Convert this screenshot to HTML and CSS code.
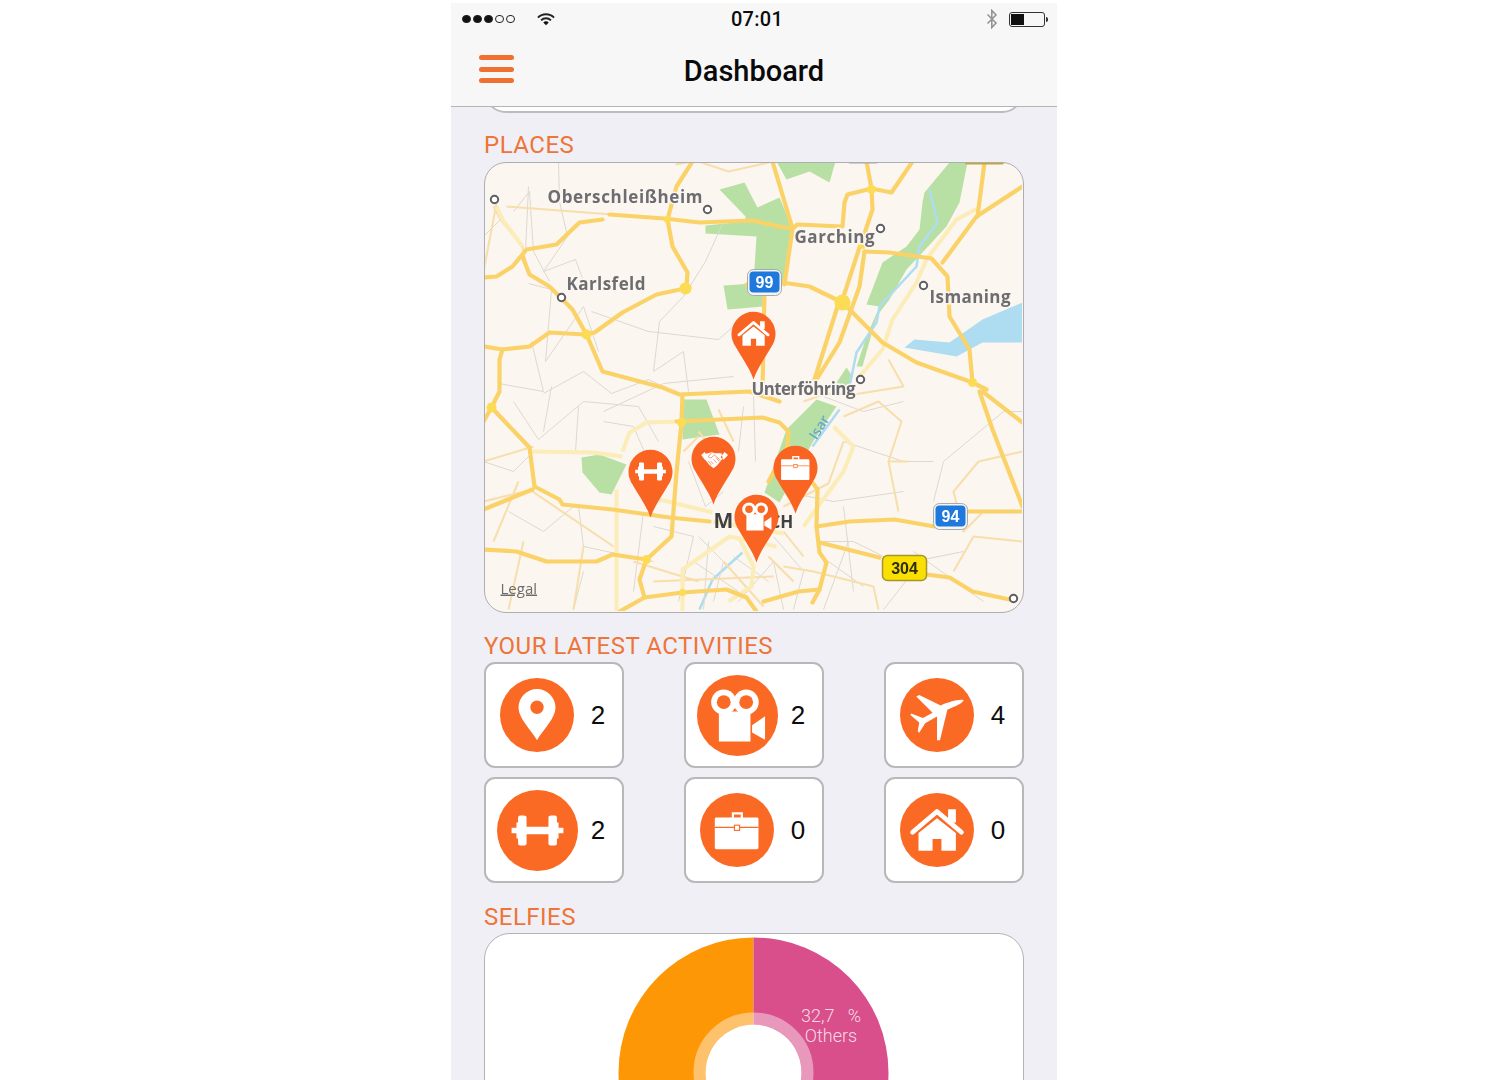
FILE: index.html
```html
<!DOCTYPE html>
<html lang="en">
<head>
<meta charset="utf-8">
<title>Dashboard</title>
<link rel="stylesheet" href="styles.css">
</head>
<body>
<svg class="defs" width="0" height="0" aria-hidden="true">
  <defs>
    <symbol id="i-home" viewBox="0 0 100 100">
      <path class="w" d="M25 54 50 34 75.500 54V78H56V62H44V78H25Z"/>
      <path class="w" d="M65 22H75.500V40H65Z"/>
      <path class="wl" d="M17 53 50 25 83 53"/>
    </symbol>
    <symbol id="i-plane" viewBox="0 0 100 100">
      <path class="w" d="M86 30C84 35 74 38 64 43L54 84 50 84 50 52 34 61 26 74 24 72 26 60 14 50 15 48 31 54 44 47 22 25 26 23 55 37C65 33 80 28 86 30Z"/>
    </symbol>
    <symbol id="i-video" viewBox="0 0 100 100">
      <circle class="w" cx="33" cy="33.500" r="15.500"/>
      <circle class="w" cx="60.700" cy="33.500" r="15.500"/>
      <path class="w" d="M27 45H66V82H27ZM68 62 84 51V80L68 71Z"/>
      <circle class="o" cx="33" cy="33.500" r="8.500"/>
      <circle class="o" cx="60.700" cy="33.500" r="8.500"/>
    </symbol>
    <symbol id="i-pin" viewBox="0 0 100 100">
      <path class="w" d="M50 84C42 70 25 55 25 40A25 25 0 0 1 75 40C75 55 58 70 50 84Z"/>
      <circle class="o" cx="50" cy="39.500" r="9"/>
    </symbol>
    <symbol id="i-gym" viewBox="0 0 100 100">
      <path class="w" d="M18 46.500H24V40H26V34Q26 31.500 28.500 31.500H33Q36.500 31.500 36.500 34V45.500H63.500V34Q63.500 31.500 67 31.500H71.500Q74 31.500 74 34V40H76V46.500H82V53.500H76V60H74V66Q74 68.500 71.500 68.500H67Q63.500 68.500 63.500 66V54.500H36.500V66Q36.500 68.500 33 68.500H28.500Q26 68.500 26 66V60H24V53.500H18Z"/>
    </symbol>
    <symbol id="i-case" viewBox="0 0 100 100">
      <path class="w" d="M43 33V26H58V33H55V29H46V33ZM22 33H77Q79 33 79 35V74Q79 76 77 76H22Q20 76 20 74V35Q20 33 22 33Z"/>
      <path class="ol" d="M20 46.500H79"/>
      <rect class="wb" x="46.500" y="43.500" width="7" height="7"/>
    </symbol>
    <symbol id="i-shake" viewBox="0 0 100 100">
      <path class="w" d="M22 42 30 35 38 48 31 54ZM83 42 75 35 66 47 73 53ZM33 39 46 36 54 38 68 38 71 50 58 66 50 72 40 64 31 52Z"/>
      <path class="ol" d="M46 37 38 46 44 49 52 42 66 54M44 56 50 63M50 52 57 60M56 48 63 57M38 56 45 65"/>
    </symbol>
  </defs>
</svg>

<main class="phone">
  <header class="bars">
    <div class="status">
      <div class="status-left">
        <span class="signal"><i class="dot on"></i><i class="dot on"></i><i class="dot on"></i><i class="dot"></i><i class="dot"></i></span>
        <svg class="wifi" width="18" height="13" viewBox="0 0 20 14">
          <path d="M1 5A12.500 12.500 0 0 1 19 5" class="wifi-arc"/>
          <path d="M4.500 8A7.500 7.500 0 0 1 15.500 8" class="wifi-arc"/>
          <path d="M7 10.300A3.800 3.800 0 0 1 13 10.300L10 13.500Z" class="wifi-fill"/>
        </svg>
      </div>
      <span class="time">07:01</span>
      <div class="status-right">
        <svg class="bt" width="12" height="20" viewBox="0 0 12 20"><path d="M1.500 5.500 10 14 5.800 18.500V1.500L10 6 1.500 14.500"/></svg>
        <span class="battery"><span class="battery-level"></span></span>
      </div>
    </div>
    <nav class="nav">
      <div class="burger"><i></i><i></i><i></i></div>
      <h1 class="title">Dashboard</h1>
      <div></div>
    </nav>
  </header>

  <div class="content">
    <div class="prev-card"></div>

    <h2 class="heading first">PLACES</h2>
    <div class="map">
      <svg class="map-svg" viewBox="1.500 1.500 537 448" width="537" height="448">
        <g class="green">
          <path d="M236 28 261 21 274 46 296 36 309 67 301 122 281 130 280 145 244 148 240 124 270 122 273 75 222 72 222 64 262 60 262 55Z"/>
          <path d="M293 0H352L346 21 326 10 303 18Z"/>
          <path d="M441 31 466 1H484L476 41 463 65 439 91 423 108 406 138 393 155 379 205H373L383 175 396 145 383 143 399 101 423 85 436 68 439 41Z"/>
          <path d="M353 221 363 206 369 215 366 228Z"/>
          <path d="M199 238H223L236 273 199 278Z"/>
          <path d="M98 296 116 293 143 303 128 333 116 331 99 311Z"/>
          <path d="M281 331 303 268 333 238 353 245 329 281 296 341Z"/>
        </g>
        <path class="lake" d="M421 186 431 178 466 181 499 158 539 141V181H499L473 195Z"/>
        <g class="river">
          <path d="M446 28 454 61 436 85 433 105 396 145 393 161 373 191 366 225"/>
          <path d="M356 248 329 285"/>
          <path d="M259 391 229 418 216 448"/>
        </g>
        <g class="thin">
          <path d="M75 0 76 40 84 75 60 110 92 98 102 125M45 25 42 90M0 75 20 55M30 50 46 30 50 90 66 120"/>
          <path d="M240 60 222 100 200 135 176 160 170 210 200 190 205 230M108 150 165 170 235 178 250 165 268 190M120 250 180 222 250 215"/>
          <path d="M48 180 60 230 15 222M60 232 100 210 128 232 165 218 200 235M45 122 68 128 62 200 100 145 115 190"/>
          <path d="M30 240 55 278 100 240 155 245 175 280M60 270 68 225M95 245 92 290M120 260 150 265 165 300"/>
          <path d="M0 300 30 310 50 290M25 350 60 370 90 345M95 345 100 385 170 400M160 350 150 430M170 365 210 375 195 440M100 410 90 448M225 380 220 448M210 400 255 430M255 440 290 400 300 448"/>
          <path d="M340 235 380 250 420 240M346 320 360 280 420 300 450 300M300 330 350 340 420 330M340 380 370 380 430 410 400 448M365 380 340 448M430 400 480 390M450 340 460 300 520 250 539 250M270 235 272 300M260 245 255 290"/>
          <path d="M360 345 370 430M430 390 500 440M215 375 240 400 230 440M290 375 320 410 310 448M345 400 380 425M250 395 285 420M205 300 222 345 240 330"/>
        </g>
        <g class="minor">
          <path d="M10 45 17 58 39 85 44 110M23 45 129 53M13 42 0 110"/>
          <path d="M290 0 245 10 215 0M209 0 192 3"/>
          <path d="M0 300 50 285M0 340 49 328M10 380 35 320M49 330 130 385M40 380 25 448M100 385 90 448"/>
          <path d="M235 248 250 280M215 270 240 300M200 290 215 275M150 400 215 420M170 420 290 415"/>
          <path d="M320 240 343 232 370 233 420 225 405 198M360 255 395 240 418 260 405 300 425 300M300 345 345 322 360 280M405 300 415 350M500 350 480 370 470 330 495 300 539 290M539 380 490 375 470 410"/>
          <path d="M330 410 390 425 395 448M300 405 330 410M285 395 310 420M240 400 280 445M300 370 320 395"/>
        </g>
        <g class="pale">
          <path d="M13 45 19 58 39 85"/>
          <path d="M376 215 399 188 409 158 433 121 443 98 473 58 496 46"/>
          <path d="M49 290 109 291 139 295"/>
          <path d="M139 290 146 271 163 261 193 260"/>
          <path d="M133 328V450"/>
          <path d="M199 450V408L246 375 293 385"/>
          <path d="M176 338 229 351"/>
          <path d="M350 265 370 285 360 310 320 365"/>
          <path d="M255 375 270 405 268 425 245 440M230 360 300 372"/>
        </g>
        <g class="major">
          <path d="M126 53 181 57 216 61 268 59 296 65 309 67 314 63 359 65 361 41 364 33 388 27 408 31 429 0"/>
          <path d="M383 0 388 27 389 48 379 78 376 86 359 138 354 145 331 218"/>
          <path d="M289 0 309 67 301 123"/>
          <path d="M263 123 299 121 326 125 359 141 399 181 433 201 489 221 503 228"/>
          <path d="M381 90 406 91 448 97 464 115 466 155 486 188 489 221"/>
          <path d="M381 90 376 125 356 181 333 218"/>
          <path d="M459 101 493 55 539 25M501 1 494 55"/>
          <path d="M209 0 193 25 184 58 189 85 204 111 203 125"/>
          <path d="M206 126 173 133 139 151 111 171 101 173 66 171 46 185 19 188 0 185"/>
          <path d="M119 58 96 61 73 83 43 88 29 105 13 115 0 116"/>
          <path d="M39 95 46 113 66 125 89 148 103 173 119 210 179 226 196 233 266 230 296 240"/>
          <path d="M19 188 16 198V228M281 131 279 228M16 230 8 246 46 286 51 325 76 338 79 343 129 348 186 356 226 360M0 260 8 246M0 348 49 328"/>
          <path d="M199 233 198 261 193 311 188 375 163 398 156 418 161 436 136 450"/>
          <path d="M193 260 279 256 296 261 305 270 304 285 285 320"/>
          <path d="M0 388 33 390 63 400 113 400 129 393 163 398"/>
          <path d="M161 436 199 431 243 428 263 436 273 450"/>
          <path d="M329 321 334 328 333 365 336 391 343 401 336 428 329 441"/>
          <path d="M333 365 366 360 411 358 451 365M484 350H539"/>
          <path d="M336 381 396 396M443 413 466 416 489 430 526 438"/>
          <path d="M496 230 509 268 539 345M499 230 539 261"/>
          <path d="M280 440 315 430 336 428"/>
        </g>
        <g class="junction">
          <circle cx="184" cy="58" r="3.500"/><circle cx="202" cy="127" r="6"/><circle cx="103" cy="173" r="5"/>
          <circle cx="388" cy="28" r="4.500"/><circle cx="359" cy="141" r="8"/><circle cx="379" cy="84" r="3.500"/>
          <circle cx="8" cy="246" r="5"/><circle cx="198" cy="261" r="4.500"/><circle cx="163" cy="398" r="4.500"/>
          <circle cx="489" cy="221" r="4.500"/><circle cx="199" cy="431" r="3.500"/>
        </g>
        <rect class="shield-cut" x="364" y="-8" width="31" height="10" rx="3"/>
        <rect class="yellow-cut" x="481" y="-8" width="40" height="11" rx="3"/>

        <g class="towns">
          <circle cx="11" cy="38" r="3.700"/><circle cx="224" cy="48" r="3.700"/><circle cx="78" cy="136" r="3.700"/>
          <circle cx="397" cy="67" r="3.700"/><circle cx="440" cy="124" r="3.700"/><circle cx="377" cy="218" r="3.700"/>
          <circle cx="530" cy="437" r="3.700"/>
        </g>

        <g class="labels">
          <text x="64" y="41" textLength="155">Oberschleißheim</text>
          <text x="83" y="128" textLength="79">Karlsfeld</text>
          <text x="311" y="81" textLength="80">Garching</text>
          <text x="446" y="141" textLength="81">Ismaning</text>
          <text x="268" y="233" textLength="104">Unterföhring</text>
        </g>
        <text class="isar" transform="translate(333 279) rotate(-58)">Isar</text>
        <text class="city" y="366"><tspan class="city-m" x="230">M</tspan><tspan x="256">UNI</tspan><tspan x="286">CH</tspan></text>
        <text class="legal" x="17" y="432">Legal</text>

        <g class="highway">
          <rect class="shield-edge" x="264" y="108" width="34" height="26" rx="6"/>
          <rect class="shield-blue" x="266" y="110" width="30" height="21" rx="4"/>
          <text x="281" y="126">99</text>
          <rect class="shield-edge" x="450" y="342" width="34" height="26" rx="6"/>
          <rect class="shield-blue" x="452" y="344" width="30" height="21" rx="4"/>
          <text x="467" y="360">94</text>
        </g>
        <rect class="shield-yellow" x="399" y="394" width="44" height="25" rx="5"/>
        <text class="shield-yellow-text" x="421" y="412">304</text>

        <g class="pins">
          <g transform="translate(270 172)"><path class="pin" d="M0 46C-4 34-12 24-18 13A22 22 0 1 1 18 13C12 24 4 34 0 46Z"/><use href="#i-home" x="-22" y="-22" width="44" height="44"/></g>
          <g transform="translate(167 310)"><path class="pin" d="M0 46C-4 34-12 24-18 13A22 22 0 1 1 18 13C12 24 4 34 0 46Z"/><use href="#i-gym" x="-24" y="-24" width="48" height="48"/></g>
          <g transform="translate(230 297)"><path class="pin" d="M0 46C-4 34-12 24-18 13A22 22 0 1 1 18 13C12 24 4 34 0 46Z"/><use href="#i-shake" x="-22" y="-22" width="44" height="44"/></g>
          <g transform="translate(312 306)"><path class="pin" d="M0 46C-4 34-12 24-18 13A22 22 0 1 1 18 13C12 24 4 34 0 46Z"/><use href="#i-case" x="-24" y="-24" width="48" height="48"/></g>
          <g transform="translate(273 355)"><path class="pin" d="M0 46C-4 34-12 24-18 13A22 22 0 1 1 18 13C12 24 4 34 0 46Z"/><use href="#i-video" x="-22" y="-22" width="44" height="44"/></g>
        </g>
      </svg>
    </div>

    <h2 class="heading">YOUR LATEST ACTIVITIES</h2>
    <div class="activities">
      <div class="activity"><div class="icon-slot"><svg class="badge" width="74" height="74" viewBox="0 0 100 100"><circle class="o" cx="50" cy="50" r="50"/><use href="#i-pin"/></svg></div><span class="count">2</span></div>
      <div class="activity"><div class="icon-slot"><svg class="badge" width="81" height="81" viewBox="0 0 100 100"><circle class="o" cx="50" cy="50" r="50"/><use href="#i-video"/></svg></div><span class="count">2</span></div>
      <div class="activity"><div class="icon-slot"><svg class="badge" width="74" height="74" viewBox="0 0 100 100"><circle class="o" cx="50" cy="50" r="50"/><use href="#i-plane"/></svg></div><span class="count">4</span></div>
      <div class="activity"><div class="icon-slot"><svg class="badge" width="81" height="81" viewBox="0 0 100 100"><circle class="o" cx="50" cy="50" r="50"/><use href="#i-gym"/></svg></div><span class="count">2</span></div>
      <div class="activity"><div class="icon-slot"><svg class="badge" width="74" height="74" viewBox="0 0 100 100"><circle class="o" cx="50" cy="50" r="50"/><use href="#i-case"/></svg></div><span class="count">0</span></div>
      <div class="activity"><div class="icon-slot"><svg class="badge" width="74" height="74" viewBox="0 0 100 100"><circle class="o" cx="50" cy="50" r="50"/><use href="#i-home"/></svg></div><span class="count">0</span></div>
    </div>

    <h2 class="heading selfies">SELFIES</h2>
    <div class="chart-card">
      <svg class="chart" viewBox="0 0 537 150" width="537" height="150">
        <path class="slice-orange" d="M268.500 3.500A135 135 0 0 0 268.500 273.500Z"/>
        <path class="slice-pink" d="M268.500 3.500A135 135 0 0 1 268.500 273.500Z"/>
        <circle class="hole-ring" cx="268.500" cy="138.500" r="54"/>
        <circle class="hole" cx="268.500" cy="138.500" r="48"/>
        <text class="slice-label" x="346" y="88">32,7   %</text>
        <text class="slice-label" x="346" y="108">Others</text>
      </svg>
    </div>
  </div>
</main>
</body>
</html>
```

FILE: styles.css
```css
* { box-sizing: border-box; }

html, body {
  margin: 0;
  height: 1080px;
  overflow: hidden;
  background: #fff;
}

body {
  padding: 3px 0 0 451px;
  font-family: Roboto, "Liberation Sans", sans-serif;
  color: #0c0c0c;
}

.defs { position: absolute; }

.phone {
  width: 606px;
  height: 1077px;
  overflow: hidden;
  background: #efeff5;
  display: flex;
  flex-direction: column;
}

/* Bars */
.bars {
  background: #f7f7f8;
  border-bottom: 1px solid #b4b4b6;
  height: 104px;
  flex: none;
  position: relative;
  z-index: 1;
}

.status {
  height: 32px;
  display: grid;
  grid-template-columns: 1fr auto 1fr;
  align-items: center;
  padding: 0 9px 0 11px;
}

.status-left, .status-right { display: flex; align-items: center; }
.status-right { justify-content: flex-end; }

.signal { display: flex; gap: 2.500px; }

.dot {
  width: 8.500px;
  height: 8.500px;
  border-radius: 50%;
  border: 1px solid #222;
}
.dot.on { background: #111; }

.wifi { margin-left: 22px; }
.wifi-arc { fill: none; stroke: #222; stroke-width: 2; }
.wifi-fill { fill: #111; }

.time {
  font-size: 20px;
  font-weight: 500;
  margin-left: 4px;
  letter-spacing: .3px;
}

.bt { margin-right: 11px; }
.bt path { fill: none; stroke: #949496; stroke-width: 1.600; }

.battery {
  position: relative;
  width: 36px;
  height: 15px;
  border: 1px solid #333;
  border-radius: 3px;
  padding: 1px;
  margin-right: 3px;
  display: block;
}
.battery::after {
  content: "";
  position: absolute;
  right: -4px;
  top: 4px;
  width: 2.500px;
  height: 5px;
  background: #333;
  border-radius: 0 2px 2px 0;
}
.battery-level {
  display: block;
  width: 13px;
  height: 100%;
  background: #111;
}

.nav {
  height: 71px;
  display: grid;
  grid-template-columns: 1fr auto 1fr;
  align-items: center;
  padding: 0 28px;
}

.burger {
  display: flex;
  flex-direction: column;
  gap: 6.500px;
  width: 35px;
  margin-top: -3px;
}
.burger i {
  display: block;
  height: 5px;
  border-radius: 2.500px;
  background: #f0702f;
}

.title {
  margin: 0;
  font-size: 29px;
  font-weight: 500;
  color: #0a0a0a;
}

/* Content */
.content { padding: 0 33px; }

.prev-card {
  height: 40px;
  margin-top: -34px;
  background: #fff;
  border: 2px solid #bcbcbf;
  border-radius: 0 0 22px 22px;
}

.heading {
  margin: 21px 0 4px;
  height: 24px;
  font-size: 24px;
  line-height: 24px;
  font-weight: 400;
  letter-spacing: .5px;
  color: #ee7438;
}
.heading.first { margin: 20px 0 5px; }
.heading.selfies { margin: 22px 0 4px; }

.map {
  height: 451px;
  border: 1.500px solid #aeaeb0;
  border-radius: 22px;
  overflow: hidden;
  background: #fbf6ef;
}
.map-svg { display: block; filter: blur(.45px); }

.green path { fill: #b9e0a4; }
.lake { fill: #aedcf0; }
.river path { fill: none; stroke: #aedcf0; stroke-width: 2.500; stroke-linejoin: round; }
.thin path { fill: none; stroke: #dcd9d0; stroke-width: 1; }
.minor path { fill: none; stroke: #f7deac; stroke-width: 2; stroke-linejoin: round; }
.pale path { fill: none; stroke: #fbecb8; stroke-width: 4; stroke-linejoin: round; }
.major path { fill: none; stroke: #fbd268; stroke-width: 4.200; stroke-linejoin: round; stroke-linecap: round; }
.junction circle { fill: #fddc55; }
.shield-cut { fill: #a7a5a2; }
.yellow-cut { fill: #c4a92c; }

.towns circle { fill: #fff; stroke: #5f5f62; stroke-width: 2; }

.labels text {
  font-family: "Open Sans", "Liberation Sans", sans-serif;
  font-size: 17px;
  font-weight: 700;
  fill: #6c6c71;
  stroke: #fbf6ef;
  stroke-width: 3px;
  paint-order: stroke;
}
.isar {
  font-family: "Open Sans", sans-serif;
  font-size: 14px;
  font-weight: 600;
  fill: #68a8c6;
}
.city {
  font-family: "Open Sans", "Liberation Sans", sans-serif;
  font-size: 17px;
  font-weight: 700;
  fill: #3f3f44;
}
.city-m { font-size: 21px; }
.legal {
  font-family: "Open Sans", sans-serif;
  font-size: 15px;
  fill: #6d6d6d;
  text-decoration: underline;
}

.highway text {
  font-family: "Liberation Sans", sans-serif;
  font-size: 16px;
  font-weight: 700;
  text-anchor: middle;
  fill: #fff;
}
.shield-edge { fill: #f3f4f5; stroke: #a9a9a9; stroke-width: 1; }
.shield-blue { fill: #1f78dc; }
.shield-yellow { fill: #f9e000; stroke: #a8942c; stroke-width: 1.500; }
.shield-yellow-text {
  font-family: "Liberation Sans", sans-serif;
  font-size: 16px;
  font-weight: 700;
  text-anchor: middle;
  fill: #2e2c18;
}

.pin { fill: #fa6423; }

/* Shared icon parts */
.w { fill: #fff; }
.o { fill: #fa6a24; }
.wl { fill: none; stroke: #fff; stroke-width: 6.500; stroke-linecap: round; stroke-linejoin: round; }
.ol { fill: none; stroke: #fa6a24; stroke-width: 1.500; }
.wb { fill: #fff; stroke: #fa6a24; stroke-width: 1.500; }

/* Activities */
.activities {
  display: grid;
  grid-template-columns: repeat(3, 140px);
  grid-auto-rows: 106px;
  justify-content: space-between;
  row-gap: 9px;
}

.activity {
  display: flex;
  align-items: center;
  background: #fff;
  border: 2px solid #b8b8ba;
  border-radius: 11px;
}

.icon-slot {
  width: 102px;
  flex: none;
  display: flex;
  justify-content: center;
}
.badge { display: block; }

.count {
  font-size: 26px;
  width: 20px;
  text-align: center;
  font-family: "Liberation Sans", sans-serif;
}

/* Chart */
.chart-card {
  height: 200px;
  background: #fff;
  border: 1.500px solid #b4b4b6;
  border-radius: 26px;
}
.chart { display: block; }
.slice-orange { fill: #fe9705; }
.slice-pink { fill: #d84f8b; }
.hole-ring { fill: none; stroke: #fff; stroke-opacity: .42; stroke-width: 12; }
.hole { fill: #fff; }
.slice-label {
  font-family: Roboto, sans-serif;
  font-weight: 300;
  font-size: 18px;
  text-anchor: middle;
  white-space: pre;
  fill: #fff;
  fill-opacity: .8;
}
```
